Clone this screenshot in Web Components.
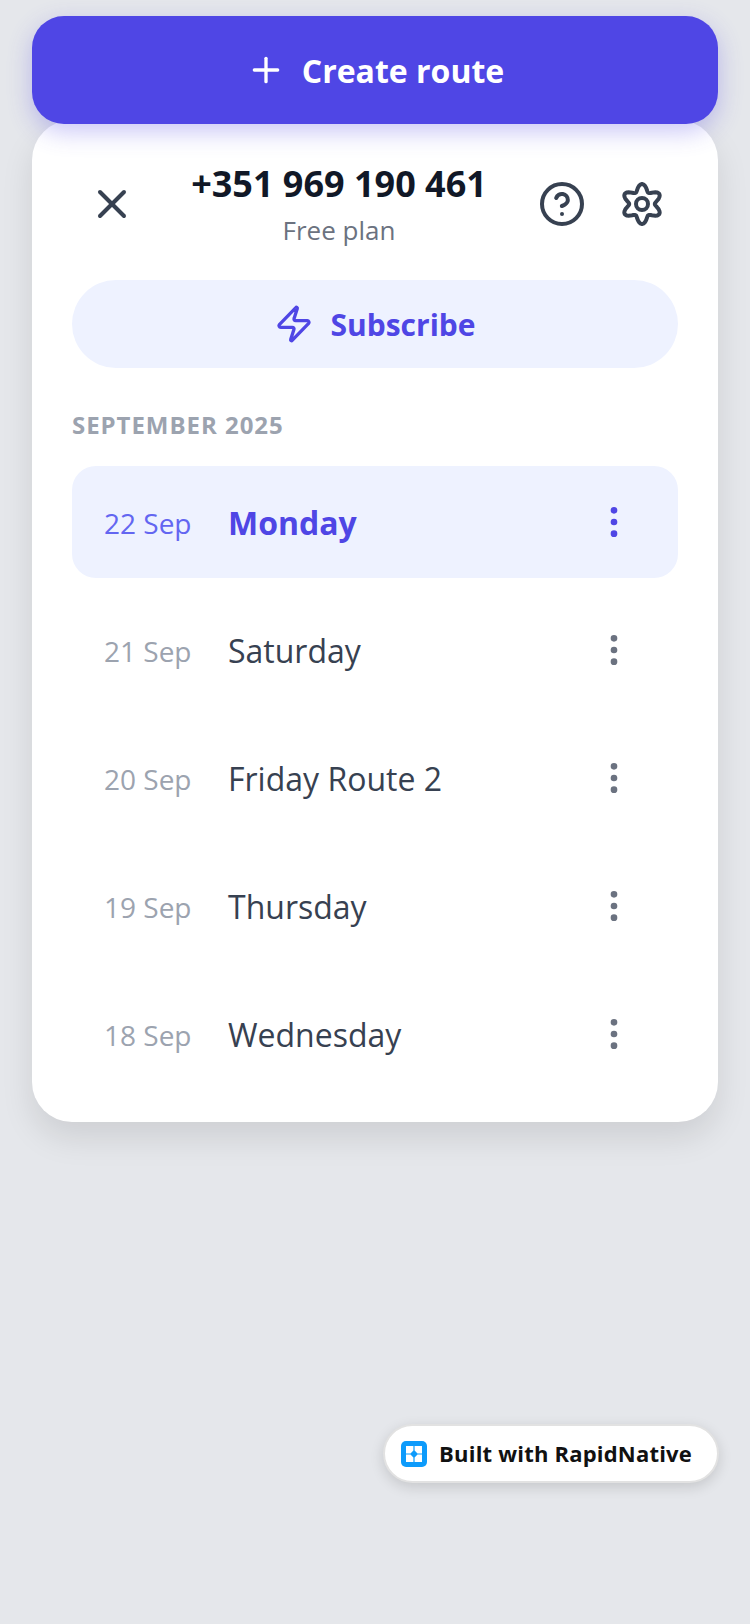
<!DOCTYPE html>
<html lang="en">
<head>
<meta charset="utf-8">
<title>Routes</title>
<style>
  html, body { margin: 0; padding: 0; background: #e5e7eb; }
  body { font-family: "Open Sans", "Liberation Sans", sans-serif; }
</style>
</head>
<body>
<route-screen>
  <create-button>Create route</create-button>
  <route-card phone="+351 969 190 461" plan="Free plan" month="SEPTEMBER 2025">
    <route-row date="22 Sep" active>Monday</route-row>
    <route-row date="21 Sep">Saturday</route-row>
    <route-row date="20 Sep">Friday Route 2</route-row>
    <route-row date="19 Sep">Thursday</route-row>
    <route-row date="18 Sep">Wednesday</route-row>
  </route-card>
  <built-badge>Built with RapidNative</built-badge>
</route-screen>

<script>
// six rounded lobes, one straight up, the outline stays 10 units from the centre at its tips
function gearPath() {
    const pts = [];
    for (let i = 0; i < 96; i++) {
        const a = (i / 96) * Math.PI * 2;
        const r = 8.2 + 1.8 * Math.cos(6 * a);
        pts.push((12 + r * Math.sin(a)).toFixed(2) + " " + (12 - r * Math.cos(a)).toFixed(2));
    }
    return "M" + pts.join("L") + "z";
}

const ICONS = {
    plus: '<path d="M5 12h14"/><path d="M12 5v14"/>',
    x: '<path d="M18 6 6 18"/><path d="m6 6 12 12"/>',
    help: '<circle cx="12" cy="12" r="10"/><path d="M9.09 9a3 3 0 0 1 5.83 1c0 2-3 3-3 3"/><path d="M12 17h.01"/>',
    settings: `<path d="${gearPath()}"/><circle cx="12" cy="12" r="3"/>`,
    zap: '<path d="M4 14a1 1 0 0 1-.78-1.63l9.9-10.2a.5.5 0 0 1 .86.46l-1.92 6.02A1 1 0 0 0 13 10h7a1 1 0 0 1 .78 1.63l-9.9 10.2a.5.5 0 0 1-.86-.46l1.92-6.02A1 1 0 0 0 11 14z"/>',
    dots: '<circle cx="12" cy="12" r="1"/><circle cx="12" cy="5" r="1"/><circle cx="12" cy="19" r="1"/>'
};

function icon(name, size) {
    return `<svg width="${size}" height="${size}" viewBox="0 0 24 24" fill="none" stroke="currentColor" stroke-width="2" stroke-linecap="round" stroke-linejoin="round">${ICONS[name]}</svg>`;
}

class RouteScreen extends HTMLElement {
    constructor() {
        super();
        this.attachShadow({ mode: "open" });
        this.shadowRoot.innerHTML = `
            <style>
                :host {
                    display: flex;
                    flex-direction: column;
                    box-sizing: border-box;
                    position: relative;
                    height: 1624px;
                    padding: 16px 32px 0;
                    background: #e5e7eb;
                    overflow: hidden;
                }
            </style>
            <slot></slot>
        `;
    }
}

class CreateButton extends HTMLElement {
    constructor() {
        super();
        this.attachShadow({ mode: "open" });
        this.shadowRoot.innerHTML = `
            <style>
                :host {
                    display: flex;
                    align-items: center;
                    justify-content: center;
                    gap: 16px;
                    height: 108px;
                    position: relative;
                    z-index: 2;
                    border-radius: 32px;
                    background: #4f46e5;
                    color: #fff;
                    font-size: 32px;
                    font-weight: 700;
                    box-shadow: 0 8px 24px rgba(79, 70, 229, 0.3);
                }
                svg { display: block; }
            </style>
            ${icon("plus", 40)}
            <span><slot></slot></span>
        `;
    }
}

class RouteCard extends HTMLElement {
    constructor() {
        super();
        this.attachShadow({ mode: "open" });
        this.shadowRoot.innerHTML = `
            <style>
                :host {
                    display: block;
                    box-sizing: border-box;
                    margin-top: -4px;
                    padding: 40px 40px 32px;
                    border-radius: 40px;
                    background: #fff;
                    box-shadow: 0 16px 32px rgba(0, 0, 0, 0.1);
                }
                header {
                    display: flex;
                    align-items: center;
                    height: 88px;
                }
                .btn {
                    display: flex;
                    align-items: center;
                    justify-content: center;
                    flex: none;
                    width: 80px;
                    height: 80px;
                    color: #374151;
                }
                .title {
                    flex: 1;
                    padding-left: 4px;
                    text-align: center;
                }
                .phone {
                    font-size: 36px;
                    line-height: 48px;
                    font-weight: 700;
                    color: #111827;
                }
                .plan {
                    margin-top: 4px;
                    font-size: 26px;
                    line-height: 36px;
                    color: #6b7280;
                }
                .actions {
                    display: flex;
                    margin-right: -4px;
                }
                .subscribe {
                    display: flex;
                    align-items: center;
                    justify-content: center;
                    gap: 16px;
                    height: 88px;
                    margin-top: 32px;
                    border-radius: 44px;
                    background: #eef2ff;
                    color: #4f46e5;
                    font-size: 30px;
                    font-weight: 700;
                }
                .month {
                    margin: 39px 0 23px;
                    font-size: 24px;
                    line-height: 36px;
                    font-weight: 700;
                    letter-spacing: 0.96px;
                    color: #9ca3af;
                }
                .list {
                    display: flex;
                    flex-direction: column;
                    gap: 16px;
                }
                svg { display: block; }
            </style>
            <header>
                <div class="btn">${icon("x", 48)}</div>
                <div class="title">
                    <div class="phone">${this.getAttribute("phone")}</div>
                    <div class="plan">${this.getAttribute("plan")}</div>
                </div>
                <div class="actions">
                    <div class="btn">${icon("help", 48)}</div>
                    <div class="btn">${icon("settings", 48)}</div>
                </div>
            </header>
            <div class="subscribe">${icon("zap", 40)}<span>Subscribe</span></div>
            <div class="month">${this.getAttribute("month")}</div>
            <div class="list"><slot></slot></div>
        `;
    }
}

class RouteRow extends HTMLElement {
    constructor() {
        super();
        this.attachShadow({ mode: "open" });
        this.shadowRoot.innerHTML = `
            <style>
                :host {
                    display: flex;
                    align-items: center;
                    box-sizing: border-box;
                    height: 112px;
                    padding: 0 32px;
                    border-radius: 24px;
                    color: #374151;
                }
                :host([active]) {
                    background: #eef2ff;
                    color: #4f46e5;
                }
                .date {
                    flex: none;
                    width: 124px;
                    margin-top: 2px;
                    font-size: 28px;
                    color: #9ca3af;
                }
                :host([active]) .date {
                    color: #6366f1;
                }
                .name {
                    flex: 1;
                    font-size: 32px;
                }
                :host([active]) .name {
                    font-weight: 700;
                }
                .more {
                    display: flex;
                    justify-content: center;
                    flex: none;
                    width: 64px;
                    color: #6b7280;
                }
                :host([active]) .more {
                    color: #4f46e5;
                }
                svg { display: block; }
            </style>
            <div class="date">${this.getAttribute("date")}</div>
            <div class="name"><slot></slot></div>
            <div class="more">${icon("dots", 40)}</div>
        `;
    }
}

class BuiltBadge extends HTMLElement {
    constructor() {
        super();
        this.attachShadow({ mode: "open" });
        this.shadowRoot.innerHTML = `
            <style>
                :host {
                    position: absolute;
                    right: 31px;
                    top: 1424px;
                    display: flex;
                    align-items: center;
                    gap: 12px;
                    box-sizing: border-box;
                    height: 59px;
                    padding: 0 25px 0 16px;
                    border: 2px solid #e2e2e2;
                    border-radius: 30px;
                    background: #fff;
                    color: #111;
                    font-size: 22px;
                    font-weight: 700;
                    letter-spacing: 0.2px;
                    box-shadow: 0 4px 14px rgba(0, 0, 0, 0.14);
                }
                span { margin-top: -2px; }
                svg { display: block; }
            </style>
            <svg width="26" height="26" viewBox="0 0 26 26">
                <rect width="26" height="26" rx="5" fill="#0d9bfb"/>
                <path d="M5 5h7.4v4.5L9.5 12.4H5z M13.6 5H21v7.4h-4.5L13.6 9.5z M5 13.6h4.5l2.9 2.9V21H5z M21 13.6V21h-7.4v-4.5l2.9-2.9z" fill="#fff"/>
            </svg>
            <span><slot></slot></span>
        `;
    }
}

customElements.define("route-screen", RouteScreen);
customElements.define("create-button", CreateButton);
customElements.define("route-card", RouteCard);
customElements.define("route-row", RouteRow);
customElements.define("built-badge", BuiltBadge);
</script>
</body>
</html>
